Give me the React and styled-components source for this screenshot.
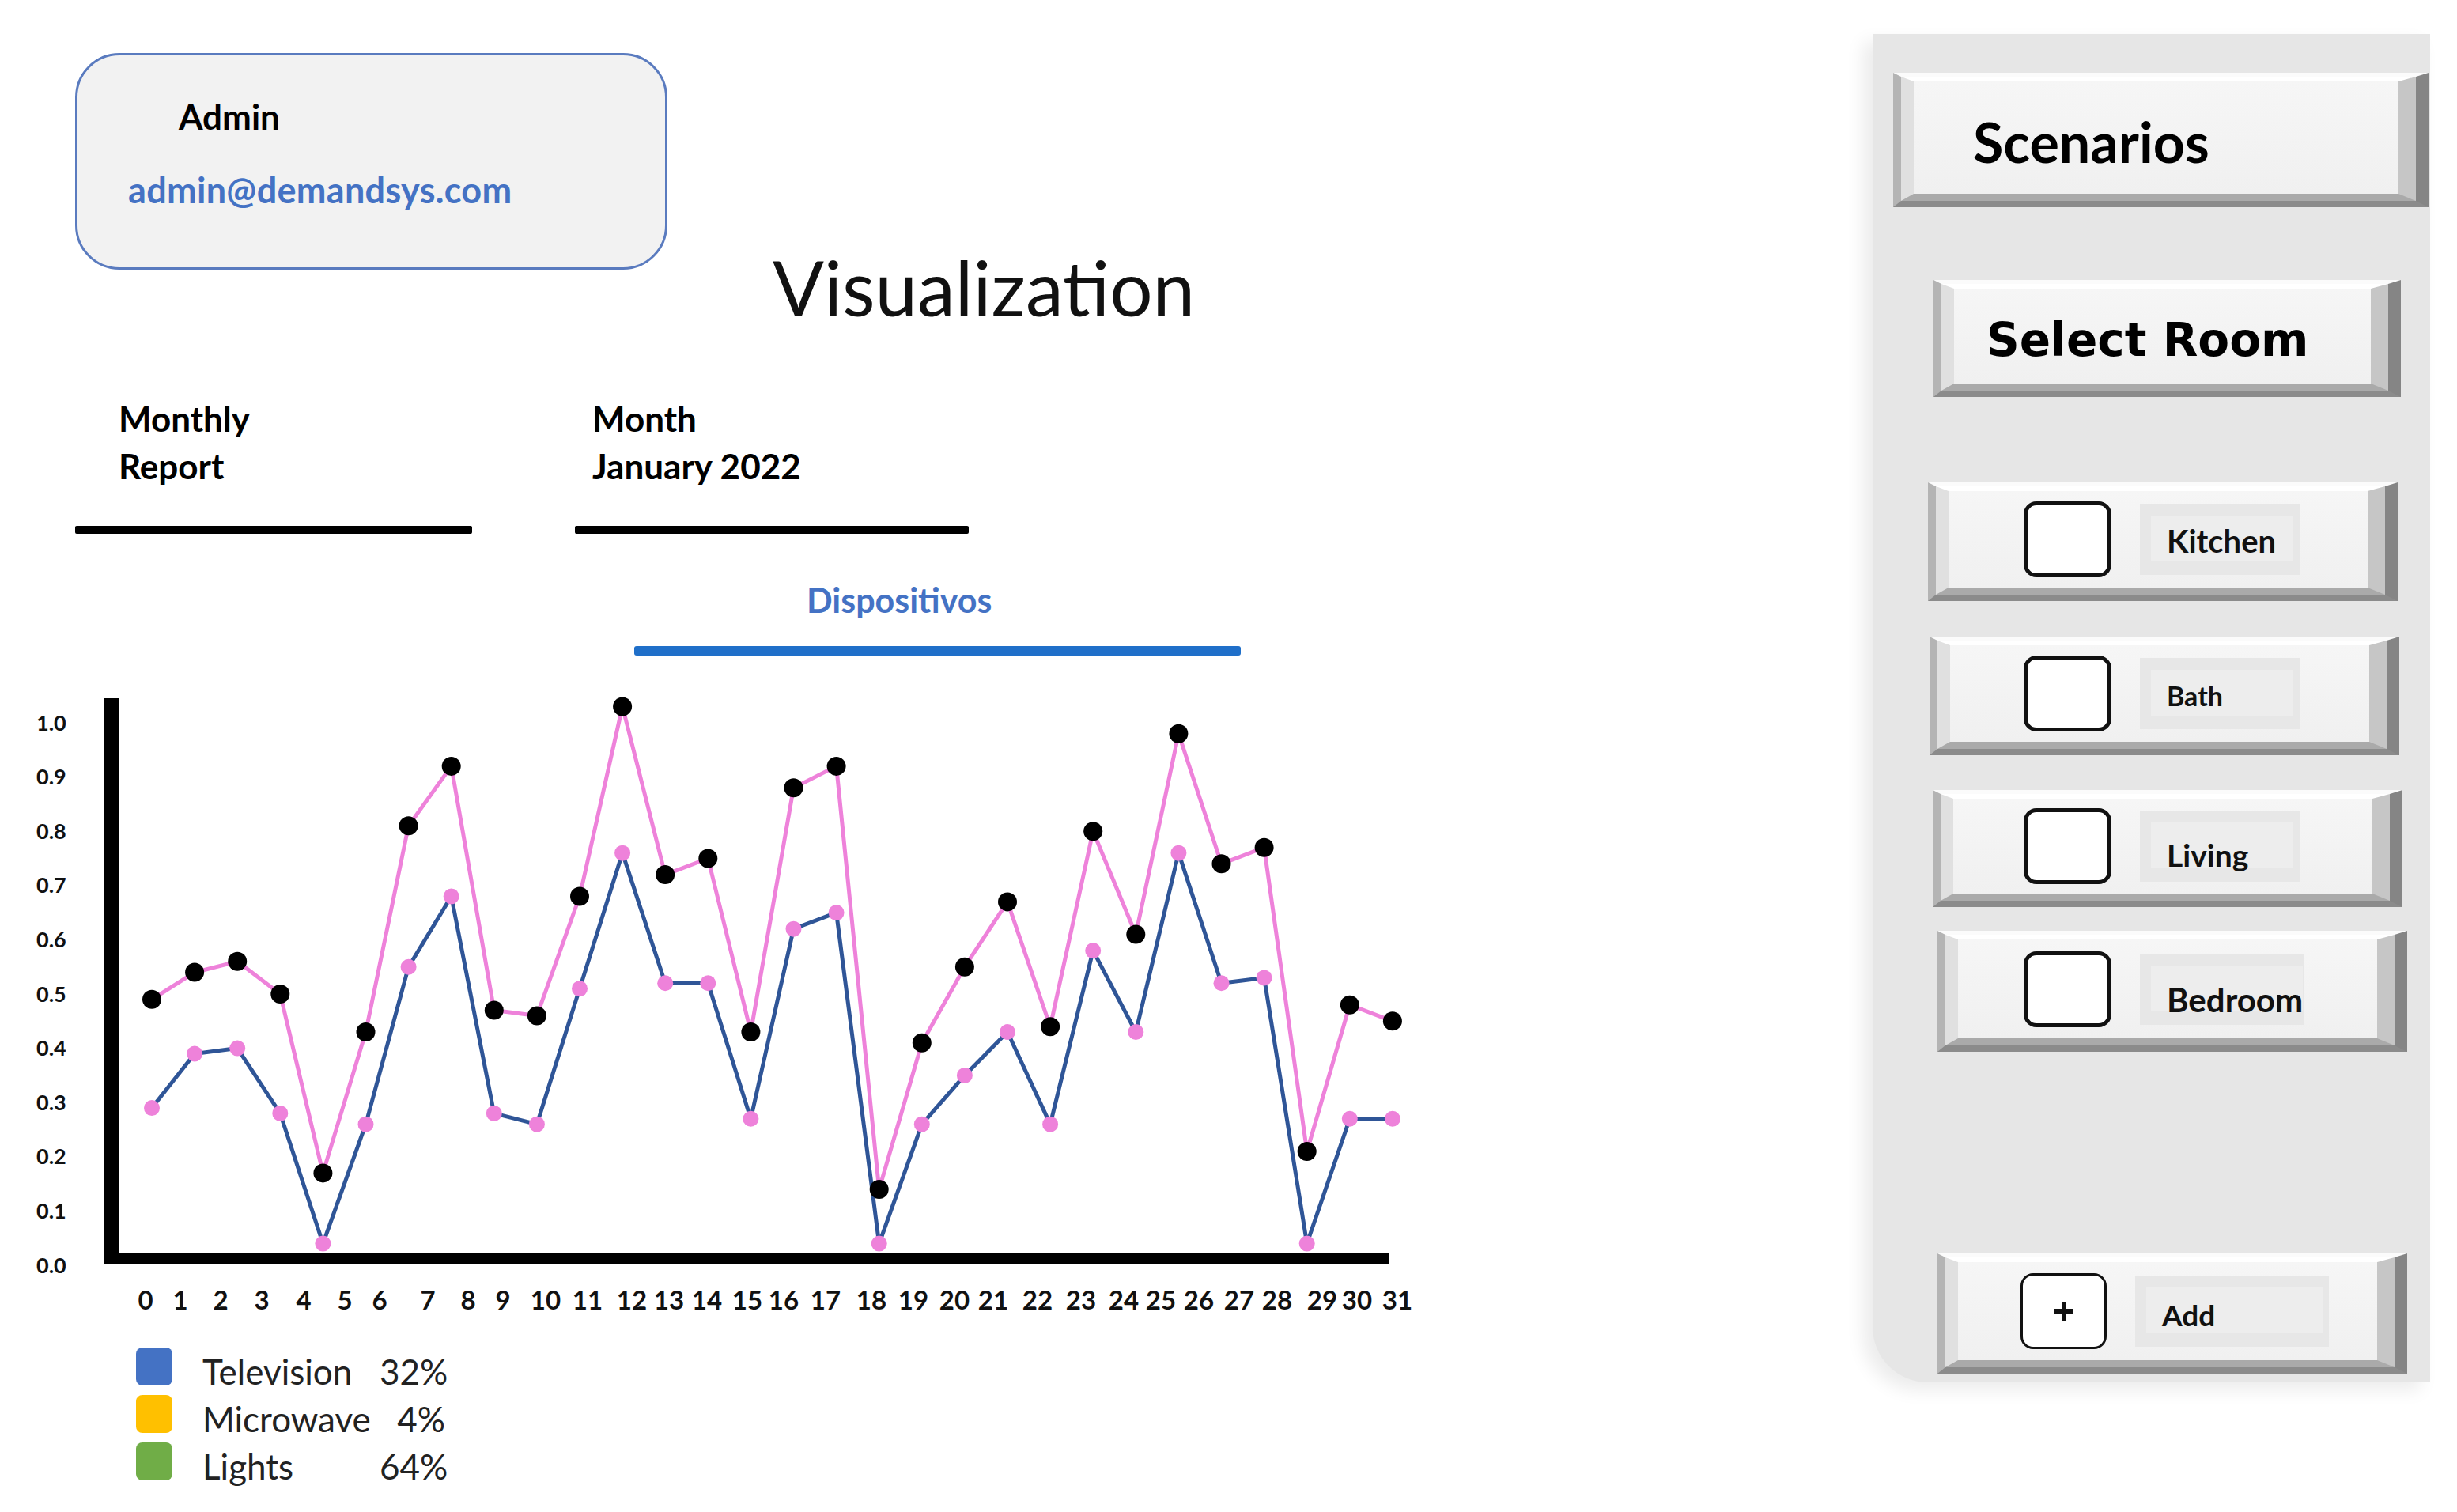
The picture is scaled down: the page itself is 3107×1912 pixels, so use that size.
import React from 'react';
import styled, { createGlobalStyle } from 'styled-components';

const GlobalStyle = createGlobalStyle`
  * { box-sizing: border-box; }
  html, body {
    margin: 0;
    padding: 0;
    background: #fff;
  }
  body {
    width: 3107px;
    height: 1912px;
    overflow: hidden;
    font-family: Lato, "Liberation Sans", sans-serif;
    color: #000;
  }
`;

// daily readings, 0..29
const TOP = [0.49, 0.54, 0.56, 0.5, 0.17, 0.43, 0.81, 0.92, 0.47, 0.46, 0.68, 1.03, 0.72, 0.75, 0.43,
  0.88, 0.92, 0.14, 0.41, 0.55, 0.67, 0.44, 0.8, 0.61, 0.98, 0.74, 0.77, 0.21, 0.48, 0.45];
const LOW = [0.29, 0.39, 0.4, 0.28, 0.04, 0.26, 0.55, 0.68, 0.28, 0.26, 0.51, 0.76, 0.52, 0.52, 0.27,
  0.62, 0.65, 0.04, 0.26, 0.35, 0.43, 0.26, 0.58, 0.43, 0.76, 0.52, 0.53, 0.04, 0.27, 0.27];
const DAY_X = [184, 228, 279, 331, 384, 436, 480, 541, 592, 636, 690, 743, 799, 846, 894, 945, 991,
  1044, 1102, 1155, 1207, 1256, 1312, 1367, 1421, 1468, 1516, 1567, 1615, 1672, 1716, 1767];
const TICKS = ['1.0', '0.9', '0.8', '0.7', '0.6', '0.5', '0.4', '0.3', '0.2', '0.1', '0.0'];

const px = (i) => 192 + i * 54.1;
const py = (v) => 1600 - v * 686;
const points = (data) => data.map((v, i) => `${px(i)},${py(v)}`).join(' ');

const rooms = [
  { name: 'Kitchen', top: 108, indent: 70, h: 150, size: 40, drop: 3 },
  { name: 'Bath', top: 45, indent: 72, h: 150, size: 34, drop: 3 },
  { name: 'Living', top: 44, indent: 76, h: 148, size: 39, drop: 12 },
  { name: 'Bedroom', top: 30, indent: 82, h: 153, size: 42, drop: 14, w: 207 },
];

const legend = [
  { label: 'Television', pct: '32%', color: '#4472c4' },
  { label: 'Microwave', pct: '4%', color: '#ffc000' },
  { label: 'Lights', pct: '64%', color: '#70ad47' },
];

const Page = styled.div`
  display: flex;
  width: 3107px;
  height: 1912px;
`;

const Main = styled.main`
  flex: 0 0 2368px;
  padding-top: 67px;
`;

const Header = styled.header`
  display: flex;
  align-items: flex-start;
  margin-left: 95px;
`;

const ProfileCard = styled.div`
  width: 749px;
  height: 274px;
  padding-top: 52px;
  border: 3px solid #5a7bbf;
  border-radius: 56px;
  background: #f2f2f2;
`;

const ProfileName = styled.div`
  padding-left: 128px;
  font-size: 44px;
  font-weight: 700;
  line-height: 50px;
`;

const ProfileEmail = styled.div`
  margin-top: 43px;
  padding-left: 64px;
  font-size: 45px;
  font-weight: 700;
  line-height: 50px;
  letter-spacing: 0.3px;
  color: #4472c4;
`;

const PageTitle = styled.h1`
  margin: 239px 0 0 133px;
  font-size: 96px;
  font-weight: 400;
  line-height: 113px;
  color: #111;
`;

const ReportRow = styled.div`
  display: flex;
  gap: 130px;
  margin: 80px 0 0 95px;
`;

const ReportField = styled.div`
  width: ${(p) => p.$w}px;
`;

const FieldText = styled.div`
  padding-left: ${(p) => p.$indent}px;
  font-size: 44px;
  font-weight: 700;
  line-height: 60px;
`;

const FieldRule = styled.div`
  margin-top: 46px;
  height: 10px;
  border-radius: 2px;
  background: #000;
`;

const DeviceHeader = styled.div`
  width: 767px;
  margin: 60px 0 0 802px;
`;

const DeviceTitle = styled.div`
  padding-left: 218px;
  font-size: 43px;
  font-weight: 700;
  line-height: 48px;
  color: #4472c4;
`;

const DeviceRule = styled.div`
  margin-top: 34px;
  height: 12px;
  border-radius: 3px;
  background: #1f6fc9;
`;

const Chart = styled.svg`
  display: block;
  margin-top: 31px;
`;

const AxisText = styled.text`
  font-family: Lato, "Liberation Sans", sans-serif;
  font-weight: 700;
  font-size: ${(p) => p.$size}px;
  fill: #111;
`;

const Legend = styled.ul`
  list-style: none;
  margin: 14px 0 0 172px;
  padding: 0;
`;

const LegendItem = styled.li`
  display: flex;
  align-items: flex-start;
  height: 60px;
  font-size: 44px;
  line-height: 60px;
  color: #222;
`;

const Swatch = styled.span`
  flex: none;
  width: 46px;
  height: 48px;
  margin-right: 38px;
  border-radius: 8px;
  background: ${(p) => p.$color};
`;

const LegendLabel = styled.span`
  width: 224px;
`;

const LegendPct = styled.span`
  width: 83px;
  text-align: right;
`;

const SidePanel = styled.aside`
  flex: 0 0 705px;
  display: flex;
  flex-direction: column;
  height: 1705px;
  margin-top: 43px;
  border-bottom-left-radius: 70px;
  background: #e6e6e6;
  box-shadow: -12px 10px 22px rgba(0, 0, 0, 0.08);
`;

const Bevel = styled.div`
  flex: none;
  width: ${(p) => p.$w}px;
  height: ${(p) => p.$h}px;
  margin: ${(p) => p.$top}px 0 0 ${(p) => p.$indent}px;
  border-style: solid;
  border-width: 5px 16px 8px 10px;
  border-color: #fbfbfb #858585 #8b8b8b #b4b4b4;
`;

const BevelFace = styled.div`
  display: flex;
  align-items: center;
  height: 100%;
  padding-left: ${(p) => p.$pad}px;
  padding-top: ${(p) => p.$drop || 0}px;
  border-style: solid;
  border-width: 6px 22px 9px 16px;
  border-color: #ffffff #c6c6c6 #aaaaaa #e0e0e0;
  background: linear-gradient(#f6f6f6, #f0f0f0);
`;

const PanelHeading = styled.span`
  font-size: 70px;
  font-weight: 700;
  line-height: 1;
`;

const RoomPicker = styled.span`
  font-family: "DejaVu Sans", Verdana, sans-serif;
  font-size: 58px;
  font-weight: 700;
  line-height: 1;
`;

const Check = styled.span`
  flex: none;
  display: flex;
  align-items: center;
  justify-content: center;
  width: ${(p) => (p.$thin ? 109 : 111)}px;
  height: 96px;
  border: ${(p) => (p.$thin ? 3.5 : 5)}px solid #111;
  border-radius: 16px;
  background: #fff;
`;

const Tag = styled.span`
  flex: none;
  display: flex;
  width: ${(p) => p.$w}px;
  height: 90px;
  margin-left: 36px;
  padding: 15px 8px 17px 14px;
  background: #e7e7e7;
`;

const TagText = styled.span`
  flex: 1;
  display: flex;
  align-items: center;
  padding-left: 20px;
  padding-top: ${(p) => p.$drop * 2}px;
  background: #ededed;
  font-size: ${(p) => p.$size}px;
  font-weight: 700;
  color: #111;
`;

const PlusIcon = () => (
  <svg width="30" height="28" viewBox="0 0 30 28">
    <path d="M15 2v24M3 14h24" stroke="#111" strokeWidth="6" />
  </svg>
);

const DeviceChart = () => (
  <Chart width="1800" height="830" viewBox="0 860 1800 830">
    {TICKS.map((t, k) => (
      <AxisText key={t} $size={27} x="46" y={913 + k * 68.6} dominantBaseline="central">
        {t}
      </AxisText>
    ))}
    <rect x="132" y="883" width="18" height="715" fill="#000" />
    <rect x="132" y="1584" width="1625" height="14" fill="#000" />
    <polyline points={points(LOW)} fill="none" stroke="#2f5597" strokeWidth="5" strokeLinejoin="round" />
    <polyline points={points(TOP)} fill="none" stroke="#ee82da" strokeWidth="5" strokeLinejoin="round" />
    {LOW.map((v, i) => (
      <circle key={`l${i}`} cx={px(i)} cy={py(v)} r="10" fill="#ee82da" />
    ))}
    {TOP.map((v, i) => (
      <circle key={`t${i}`} cx={px(i)} cy={py(v)} r="12" fill="#000" />
    ))}
    {DAY_X.map((x, d) => (
      <AxisText key={d} $size={33} x={x} y="1643" textAnchor="middle" dominantBaseline="central">
        {d}
      </AxisText>
    ))}
  </Chart>
);

const App = () => {
  return (
    <Page>
      <GlobalStyle />
      <Main>
        <Header>
          <ProfileCard>
            <ProfileName>Admin</ProfileName>
            <ProfileEmail>admin@demandsys.com</ProfileEmail>
          </ProfileCard>
          <PageTitle>Visualization</PageTitle>
        </Header>

        <ReportRow>
          <ReportField $w={502}>
            <FieldText $indent={55}>Monthly<br />Report</FieldText>
            <FieldRule />
          </ReportField>
          <ReportField $w={498}>
            <FieldText $indent={22}>Month<br />January 2022</FieldText>
            <FieldRule />
          </ReportField>
        </ReportRow>

        <DeviceHeader>
          <DeviceTitle>Dispositivos</DeviceTitle>
          <DeviceRule />
        </DeviceHeader>

        <DeviceChart />

        <Legend>
          {legend.map((item) => (
            <LegendItem key={item.label}>
              <Swatch $color={item.color} />
              <LegendLabel>{item.label}</LegendLabel>
              <LegendPct>{item.pct}</LegendPct>
            </LegendItem>
          ))}
        </Legend>
      </Main>

      <SidePanel>
        <Bevel $top={49} $indent={26} $w={677} $h={170}>
          <BevelFace $pad={75} $drop={10}>
            <PanelHeading>Scenarios</PanelHeading>
          </BevelFace>
        </Bevel>
        <Bevel $top={92} $indent={77} $w={591} $h={148}>
          <BevelFace $pad={41} $drop={10}>
            <RoomPicker>Select Room</RoomPicker>
          </BevelFace>
        </Bevel>
        {rooms.map((room) => (
          <Bevel key={room.name} $top={room.top} $indent={room.indent} $w={594} $h={room.h}>
            <BevelFace $pad={165 - room.indent}>
              <Check />
              <Tag $w={room.w || 202}>
                <TagText $size={room.size} $drop={room.drop}>{room.name}</TagText>
              </Tag>
            </BevelFace>
          </Bevel>
        ))}
        <Bevel $top={255} $indent={82} $w={594} $h={152}>
          <BevelFace $pad={79}>
            <Check $thin>
              <PlusIcon />
            </Check>
            <Tag $w={245}>
              <TagText $size={37} $drop={5}>Add</TagText>
            </Tag>
          </BevelFace>
        </Bevel>
      </SidePanel>
    </Page>
  );
};

export default App;
